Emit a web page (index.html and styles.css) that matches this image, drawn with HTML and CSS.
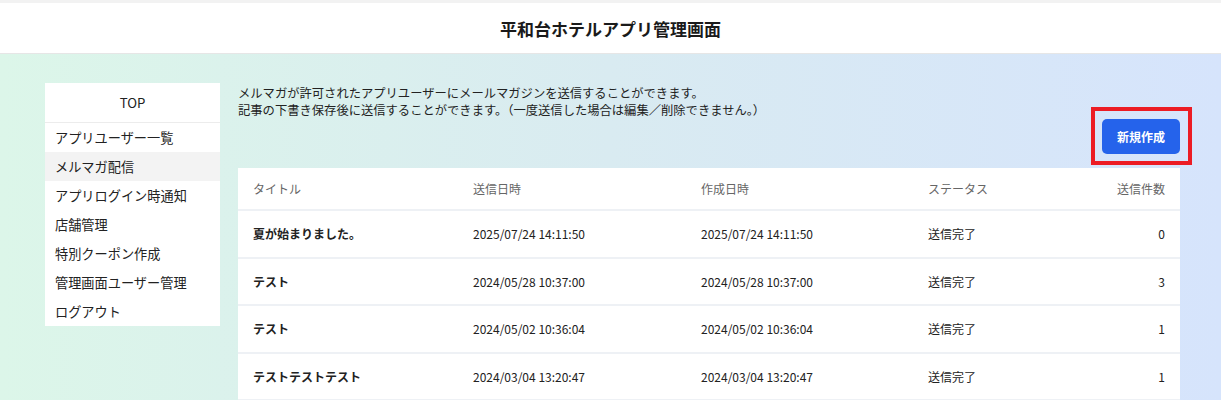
FILE: index.html
```html
<!DOCTYPE html>
<html lang="ja">
<head>
<meta charset="utf-8">
<title>平和台ホテルアプリ管理画面</title>
<link rel="stylesheet" href="styles.css">
</head>
<body>
<header class="topbar">
  <h1 class="site-title">平和台ホテルアプリ管理画面</h1>
</header>
<div class="layout">
  <nav class="sidebar">
    <div class="side-top">TOP</div>
    <ul class="side-list">
      <li class="side-item">アプリユーザー一覧</li>
      <li class="side-item active">メルマガ配信</li>
      <li class="side-item">アプリログイン時通知</li>
      <li class="side-item">店舗管理</li>
      <li class="side-item">特別クーポン作成</li>
      <li class="side-item">管理画面ユーザー管理</li>
      <li class="side-item">ログアウト</li>
    </ul>
  </nav>
  <main class="content">
    <p class="desc">メルマガが許可されたアプリユーザーにメールマガジンを送信することができます。<br>記事の下書き保存後に送信することができます。（一度送信した場合は編集／削除できません。）</p>
    <div class="actions">
      <div class="highlight">
        <button class="btn-new">新規作成</button>
      </div>
    </div>
    <div class="table-panel">
      <table class="mail-table">
        <colgroup>
          <col class="c1"><col class="c2"><col class="c3"><col class="c4"><col class="c5">
        </colgroup>
        <thead>
          <tr><th>タイトル</th><th>送信日時</th><th>作成日時</th><th>ステータス</th><th class="num">送信件数</th></tr>
        </thead>
        <tbody>
          <tr><td class="ttl">夏が始まりました。</td><td>2025/07/24 14:11:50</td><td>2025/07/24 14:11:50</td><td>送信完了</td><td class="num">0</td></tr>
          <tr><td class="ttl">テスト</td><td>2024/05/28 10:37:00</td><td>2024/05/28 10:37:00</td><td>送信完了</td><td class="num">3</td></tr>
          <tr><td class="ttl">テスト</td><td>2024/05/02 10:36:04</td><td>2024/05/02 10:36:04</td><td>送信完了</td><td class="num">1</td></tr>
          <tr><td class="ttl">テストテストテスト</td><td>2024/03/04 13:20:47</td><td>2024/03/04 13:20:47</td><td>送信完了</td><td class="num">1</td></tr>
        </tbody>
      </table>
    </div>
  </main>
</div>
</body>
</html>
```

FILE: styles.css
```css
* { box-sizing: border-box; }
html, body { margin: 0; padding: 0; }
body {
  font-family: "Noto Sans CJK JP", "Noto Sans", sans-serif;
  color: #222;
  background: linear-gradient(to right, #dcf6e9 0%, #d9ebf1 50%, #d6e4fc 100%);
  min-height: 400px;
  overflow: hidden;
}
.topbar {
  background: #fff;
  border-top: 3px solid #f2f2f2;
  border-bottom: 1px solid #e6e6e6;
  height: 54px;
  display: flex;
  align-items: center;
  justify-content: center;
}
.site-title {
  margin: 0;
  font-size: 17px;
  font-weight: 700;
  color: #1a1a1a;
  line-height: 1;
}
.layout {
  display: flex;
  align-items: flex-start;
  padding: 29px 41px 0 45px;
  gap: 18px;
}
.sidebar {
  width: 175px;
  flex: none;
  background: #fff;
}
.side-top {
  height: 40px;
  display: flex;
  align-items: center;
  justify-content: center;
  font-size: 13.2px;
  border-bottom: 1px solid #ececec;
}
.side-list { list-style: none; margin: 0; padding: 0; }
.side-item {
  height: 29px;
  display: flex;
  align-items: center;
  padding-left: 10px;
  font-size: 13.2px;
  color: #222;
}
.side-item.active { background: #f3f3f3; }
.content { flex: 1; min-width: 0; }
.desc {
  margin: 2px 0 0;
  font-size: 12.3px;
  line-height: 17px;
  color: #222;
}
.actions {
  display: flex;
  justify-content: flex-end;
}
.highlight {
  display: flex;
  border: 4px solid #ec1c24;
  padding: 8px 8px 7px 7px;
  margin: -12px -12px -11px -11px;
}
.btn-new {
  width: 78px;
  height: 35px;
  border: none;
  border-radius: 5px;
  background: #2563eb;
  color: #fff;
  font-family: inherit;
  font-size: 12px;
  font-weight: 700;
  padding: 0;
}
.table-panel {
  margin-top: 14px;
  background: #fff;
  padding-bottom: 20px;
}
.mail-table {
  width: 100%;
  border-collapse: collapse;
  table-layout: fixed;
}
.c1 { width: 220px; }
.c2 { width: 228px; }
.c3 { width: 227px; }
.c4 { width: 150px; }
.mail-table th {
  height: 42px;
  text-align: left;
  font-weight: 400;
  font-size: 12px;
  color: #666;
  padding: 0 15px 1px;
  border-bottom: 2px solid #eef1f5;
}
.mail-table td {
  height: 47.5px;
  font-size: 12px;
  color: #222;
  padding: 0 15px;
  border-bottom: 2px solid #eef1f5;
}
.mail-table td.ttl { font-weight: 700; }
.mail-table .num { text-align: right; }
```
